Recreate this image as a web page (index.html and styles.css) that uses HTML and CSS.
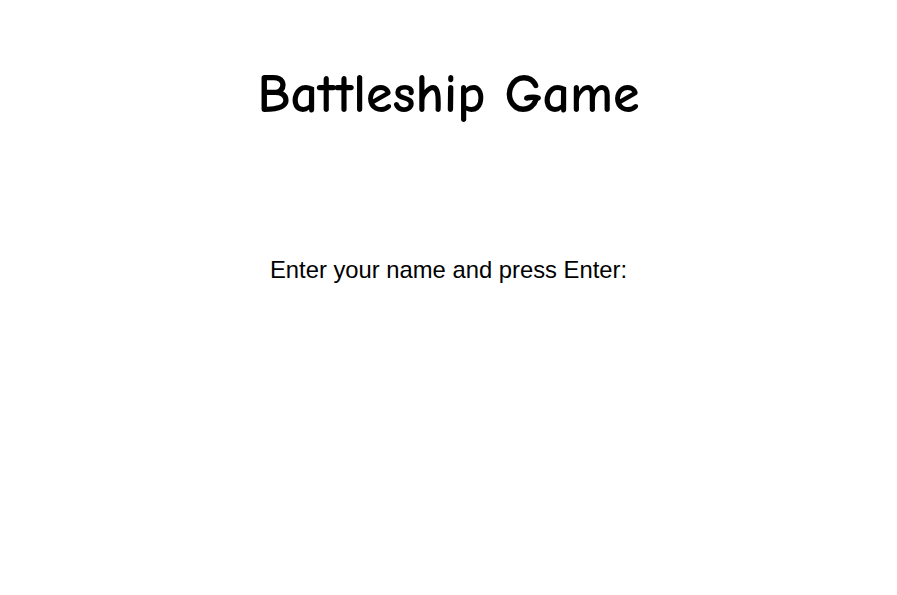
FILE: index.html
```html
<!DOCTYPE html>
<html>
<head>
<meta charset="utf-8">
<link rel="stylesheet" href="styles.css">
</head>
<body>
<div class="page">
  <h1 class="title">Battleship Game</h1>
  <p class="prompt">Enter your name and press Enter:</p>
</div>
</body>
</html>
```
FILE: styles.css
```css
html, body {
  margin: 0;
  padding: 0;
  background: #ffffff;
}
.page {
  width: 897px;
  height: 595px;
  display: flex;
  flex-direction: column;
  align-items: center;
}
.title {
  margin: 60px 0 0 0;
  font-family: "Comic Sans MS", "Comic Neue", cursive;
  font-weight: bold;
  font-size: 54px;
  line-height: 70px;
  font-variant-ligatures: none;
  color: #000;
}
.prompt {
  margin: 126px 0 0 0;
  font-family: "Liberation Sans", Arial, sans-serif;
  font-size: 23.8px;
  line-height: 28px;
  color: #000;
}
```
